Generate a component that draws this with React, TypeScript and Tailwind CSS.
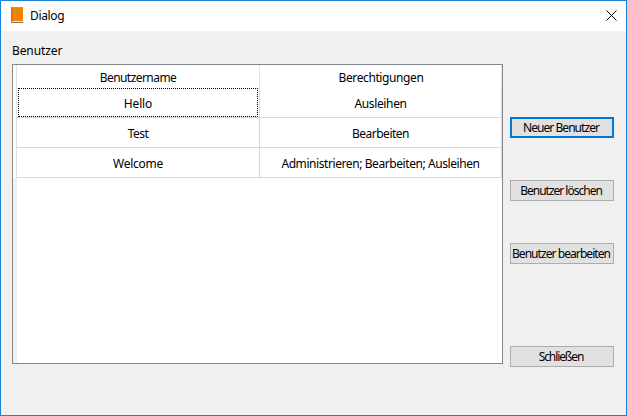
import React from "react";

const rows = [
  { name: "Hello", rights: "Ausleihen", nameTrack: "tracking-[-0.15px]", rightsTrack: "tracking-[-0.35px]" },
  { name: "Test", rights: "Bearbeiten", nameTrack: "tracking-[-0.5px]", rightsTrack: "tracking-[-0.5px]" },
  { name: "Welcome", rights: "Administrieren; Bearbeiten; Ausleihen", nameTrack: "tracking-[-0.25px]", rightsTrack: "tracking-[-0.42px]" },
];

function BookIcon() {
  return (
    <svg className="-mt-px" width="14" height="17" viewBox="0 0 14 17" shapeRendering="crispEdges">
      <rect x="0" y="0" width="12" height="14" fill="#fb8200" />
      <rect x="0" y="0" width="12" height="1" fill="#f28c22" />
      <rect x="0" y="0" width="1" height="15" fill="#c9741f" />
      <rect x="1" y="1" width="1" height="13" fill="#e87500" />
      <rect x="3" y="2" width="7" height="4" fill="#c98a1c" />
      <rect x="4" y="3" width="5" height="2" fill="#f08c0c" />
      <rect x="5" y="4" width="3" height="1" fill="#c98a1c" />
      <rect x="1" y="14" width="11" height="1" fill="#e5e2df" />
      <rect x="0" y="15" width="12" height="1" fill="#8a7462" />
    </svg>
  );
}

function Button({ label, className }: { label: string; className: string }) {
  return (
    <button className={`flex h-[21px] w-[104px] items-center justify-center whitespace-nowrap bg-[#e1e1e1] text-[12px] leading-none ${className}`}>
      {label}
    </button>
  );
}

export default function App() {
  return (
    <div className="flex h-[416px] w-[627px] flex-col overflow-hidden border border-[#1883d7] bg-[#f0f0f0] text-[12px] text-black [font-family:'Noto_Sans','Open_Sans',sans-serif]">
      <header className="flex h-[30px] items-center bg-white pl-[10px] pr-[9px]">
        <BookIcon />
        <span className="ml-[5px] leading-none tracking-[-0.35px]">Dialog</span>
        <svg className="-mt-px ml-auto" width="11" height="11" viewBox="0 0 11 11">
          <path d="M0.5 0.5L10.5 10.5M10.5 0.5L0.5 10.5" stroke="#000" strokeWidth="1" fill="none" />
        </svg>
      </header>
      <main className="flex pl-[11px]">
        <section className="w-[491px]">
          <h1 className="flex h-[33px] items-center pt-[6px] leading-none tracking-[-0.1px]">Benutzer</h1>
          <div className="flex h-[300px] border border-[#828790] bg-white">
            <div className="flex w-[4px] flex-col">
              <div className="h-[113px] border-r border-[#e0e0e0]" />
              <div className="flex-1 bg-[#f0f0f0]" />
            </div>
            <div className="w-[485px]">
              <div className="flex h-[23px] leading-none">
                <div className="flex w-[243px] items-center justify-center border-r border-[#e5e5e5] pt-[2px] tracking-[-0.55px]">Benutzername</div>
                <div className="flex w-[242px] items-center justify-center border-r border-[#e5e5e5] pl-px pt-[2px] tracking-[-0.4px]">Berechtigungen</div>
              </div>
              {rows.map((row, i) => (
                <div key={row.name} className="flex h-[30px] leading-none">
                  <div className="flex w-[243px] border-b border-r border-[#d8d8d8] pl-px pr-px">
                    <div className={`flex flex-1 items-center justify-center border border-dotted pt-[2px] ${row.nameTrack} ${i === 0 ? "border-black" : "border-transparent"}`}>{row.name}</div>
                  </div>
                  <div className={`flex w-[242px] items-center justify-center border-b border-r border-[#d8d8d8] pt-[2px] ${row.rightsTrack}`}>{row.rights}</div>
                </div>
              ))}
            </div>
          </div>
        </section>
        <aside className="ml-[7px] flex flex-col pt-[86px]">
          <Button label="Neuer Benutzer" className="border-2 border-[#0078d7] pr-[2px] pt-px tracking-[-0.95px]" />
          <Button label="Benutzer löschen" className="mt-[42px] border border-[#adadad] pr-[2px] pt-px tracking-[-1px]" />
          <Button label="Benutzer bearbeiten" className="mt-[42px] border border-[#adadad] pr-[2px] pt-px tracking-[-0.93px]" />
          <Button label="Schließen" className="mt-[82px] border border-[#adadad] pr-[2px] pt-px tracking-[-1.1px]" />
        </aside>
      </main>
    </div>
  );
}
